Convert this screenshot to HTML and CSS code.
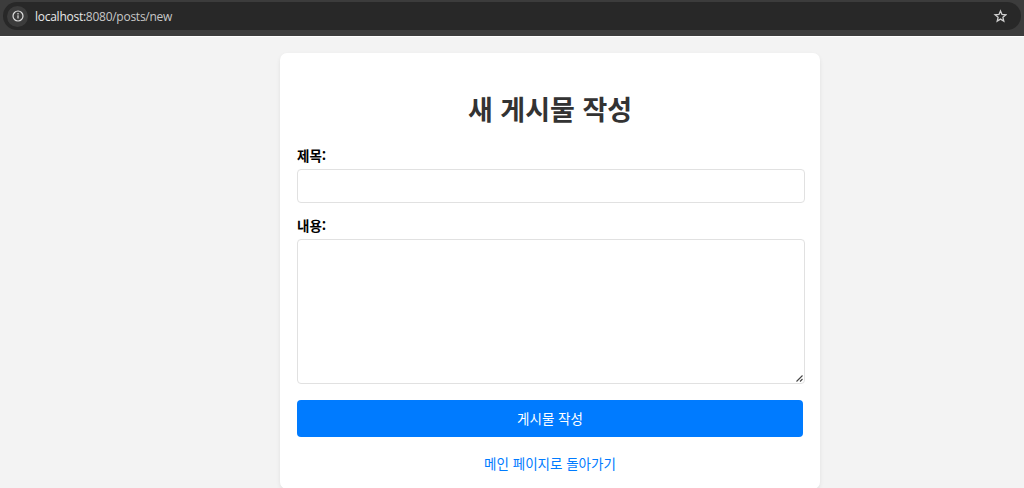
FILE: index.html
```html
<!DOCTYPE html>
<html lang="ko">
<head>
<meta charset="UTF-8">
<meta name="viewport" content="width=device-width, initial-scale=1">
<title>새 게시물 작성</title>
<link rel="stylesheet" href="styles.css">
</head>
<body>
  <header class="browser-bar">
    <div class="address">
      <span class="site-info">
        <svg width="12" height="12" viewBox="0 0 12 12" fill="none" stroke="#dedede" stroke-width="1.2">
          <circle cx="6" cy="6" r="5"/>
          <path d="M6 5.3v3.2M6 3.1v1.3"/>
        </svg>
      </span>
      <span class="url"><span class="host">localhost:</span>8080/posts/new</span>
      <svg class="star" width="14" height="14" viewBox="0 0 14 14" fill="none" stroke="#d0d0d0" stroke-width="1.3">
        <path d="M7.5 1.9l1.5 3.6 3.9.3-3 2.5.9 3.8-3.3-2-3.3 2 .9-3.8-3-2.5 3.9-.3z"/>
      </svg>
    </div>
  </header>

  <main class="container">
    <h1>새 게시물 작성</h1>
    <form>
      <label for="title">제목:</label>
      <input type="text" id="title" name="title">

      <label for="content">내용:</label>
      <div class="editor">
        <textarea id="content" name="content"></textarea>
        <svg class="grip" width="7" height="7" viewBox="0 0 7 7" stroke="#444" stroke-width="1.1">
          <path d="M.5 6.5l6-6M4 6.5l2.5-2.5"/>
        </svg>
      </div>

      <button type="submit">게시물 작성</button>
    </form>
    <a class="back" href="/">메인 페이지로 돌아가기</a>
  </main>
</body>
</html>
```
FILE: styles.css
```css
* {
  box-sizing: border-box;
}

body {
  margin: 0;
  height: 488px;
  overflow: hidden;
  background: #f3f3f3;
  font-family: "Noto Sans CJK KR", sans-serif;
}

.browser-bar {
  height: 37px;
  padding: 2px 3px 0;
  background: #3c3c3c;
  border-bottom: 1px solid #fff;
}

.address {
  display: flex;
  align-items: center;
  height: 28px;
  padding: 0 14px 0 4px;
  background: #282828;
  border-radius: 14px;
}

.site-info {
  display: flex;
  align-items: center;
  justify-content: center;
  width: 21px;
  height: 21px;
  border-radius: 50%;
  background: #3c3c3c;
}

.url {
  flex: 1;
  margin-left: 7px;
  padding-top: 2px;
  font-family: "Open Sans", "Noto Sans", sans-serif;
  font-size: 12px;
  letter-spacing: -0.26px;
  line-height: 16px;
  color: #c7c7c7;
}

.host {
  color: #e8e8e8;
}

.container {
  width: 540px;
  height: 436px;
  margin: 16px 0 0 280px;
  padding: 36px 17px 0;
  background: #fff;
  border-radius: 7px;
  box-shadow: 0 2px 4px rgba(0, 0, 0, 0.08);
}

h1 {
  margin: 0 0 17px;
  font-size: 27px;
  line-height: 40px;
  text-align: center;
  color: #333;
}

form {
  display: flex;
  flex-direction: column;
}

label {
  margin-bottom: 5px;
  font-size: 13.5px;
  font-weight: bold;
  line-height: 18px;
  color: #000;
}

input,
textarea {
  display: block;
  width: 508px;
  margin: 0;
  border: 1px solid #e1e1e1;
  border-radius: 4px;
  background: #fff;
  font: inherit;
  font-size: 13.5px;
}

input {
  height: 34px;
  margin-bottom: 13px;
  padding: 8px;
}

.editor {
  position: relative;
  width: 508px;
  margin-bottom: 16px;
}

textarea {
  height: 145px;
  padding: 8px;
  resize: none;
}

.grip {
  position: absolute;
  right: 2px;
  bottom: 2px;
}

button {
  height: 37px;
  padding: 0 0 2px;
  border: none;
  border-radius: 4px;
  background: #007bff;
  color: #fff;
  font: inherit;
  font-size: 13.5px;
  cursor: pointer;
}

.back {
  display: block;
  margin-top: 16px;
  font-size: 13.5px;
  line-height: 20px;
  text-align: center;
  text-decoration: none;
  color: #007bff;
}
```
